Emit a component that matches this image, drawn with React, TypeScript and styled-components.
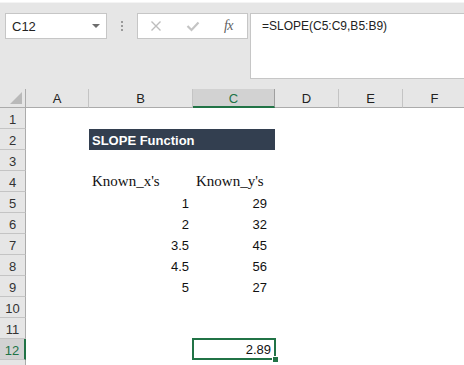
import React from "react";
import styled, { createGlobalStyle } from "styled-components";

const Global = createGlobalStyle`
  html, body { margin: 0; padding: 0; background: #ffffff; }
  body { width: 464px; height: 365px; overflow: hidden; font-family: "Liberation Sans", Arial, sans-serif; }
`;

const GREEN = "#217346";

const Page = styled.div`
  width: 464px;
  height: 365px;
  overflow: hidden;
  display: flex;
  flex-direction: column;
`;

const Toolbar = styled.div`
  flex-shrink: 0;
  box-sizing: border-box;
  background: #e6e6e6;
  border-top: 1px solid #f4f4f4;
  margin-top: 2px;
  height: 87px;
  padding: 10px 0 0 5px;
  display: flex;
  align-items: flex-start;
`;

const NameBox = styled.div`
  width: 102px;
  height: 26px;
  box-sizing: border-box;
  background: #fff;
  border: 1px solid #c6c6c6;
  display: flex;
  align-items: center;
  justify-content: space-between;
  padding: 0 6px 0 6px;
  font-size: 13px;
  color: #222;
`;

const Arrow = styled.span`
  width: 0;
  height: 0;
  border-left: 4px solid transparent;
  border-right: 4px solid transparent;
  border-top: 4px solid #6d6d6d;
`;

const Dots = styled.div`
  width: 30px;
  height: 26px;
  display: flex;
  flex-direction: column;
  align-items: center;
  justify-content: center;
  gap: 2px;
  span { width: 2px; height: 2px; background: #9a9a9a; }
`;

const Buttons = styled.div`
  width: 111px;
  height: 26px;
  box-sizing: border-box;
  background: #fff;
  border: 1px solid #c6c6c6;
  display: flex;
  align-items: center;
  justify-content: space-around;
  padding: 0 2px 0 0;
  margin-right: 2px;
`;

const Fx = styled.span`
  font-family: "Liberation Serif", "Times New Roman", serif;
  font-style: italic;
  font-size: 14px;
  color: #5f5f5f;
  letter-spacing: -0.5px;
`;

const FormulaBar = styled.div`
  flex: 1;
  height: 66px;
  box-sizing: border-box;
  background: #fff;
  border: 1px solid #c6c6c6;
  border-right: none;
  padding: 5px 0 0 11px;
  font-size: 12px;
  color: #222;
`;

const Sheet = styled.div`
  flex-shrink: 0;
  display: grid;
  grid-template-columns: 26px 63px 104px 82px 64px 64px 64px;
  grid-template-rows: 19px repeat(13, 21px);
  background: #fff;
`;

const Corner = styled.div`
  background: #e6e6e6;
  border-right: 1px solid #ababab;
  border-bottom: 1px solid #ababab;
  position: relative;
  &::after {
    content: "";
    position: absolute;
    right: 3px;
    bottom: 3px;
    width: 0;
    height: 0;
    border-left: 12px solid transparent;
    border-bottom: 12px solid #b9b9b9;
  }
`;

const ColHead = styled.div<{ $sel?: boolean }>`
  box-sizing: border-box;
  background: ${(p) => (p.$sel ? "#d2d2d2" : "#e6e6e6")};
  border-right: 1px solid ${(p) => (p.$sel ? "#9f9f9f" : "#c4c4c4")};
  border-bottom: ${(p) => (p.$sel ? `2px solid ${GREEN}` : "1px solid #ababab")};
  color: ${(p) => (p.$sel ? GREEN : "#222")};
  font-size: 13px;
  line-height: 19px;
  text-align: center;
`;

const RowHead = styled.div<{ $sel?: boolean }>`
  box-sizing: border-box;
  background: ${(p) => (p.$sel ? "#d2d2d2" : "#e6e6e6")};
  border-right: ${(p) => (p.$sel ? `2px solid ${GREEN}` : "1px solid #ababab")};
  border-bottom: 1px solid #c4c4c4;
  color: ${(p) => (p.$sel ? GREEN : "#333")};
  font-size: 13px;
  line-height: 21px;
  padding-top: 1px;
  text-align: center;
`;

const Cell = styled.div<{ $pad?: number }>`
  box-sizing: border-box;
  font-size: 13px;
  line-height: 21px;
  padding: 1px ${(p) => p.$pad ?? 4}px 0 3px;
  text-align: right;
  color: #111;
  white-space: nowrap;
`;

const SerifCell = styled.div`
  box-sizing: border-box;
  font-family: "Liberation Serif", "Times New Roman", serif;
  font-size: 15px;
  line-height: 21px;
  padding-left: 3px;
  color: #111;
  white-space: nowrap;
`;

const TitleCell = styled.div`
  grid-column: span 2;
  box-sizing: border-box;
  background: #333f50;
  color: #fff;
  font-weight: bold;
  font-size: 13px;
  line-height: 21px;
  padding: 1px 0 0 3px;
  white-space: nowrap;
`;

const Selected = styled.div`
  box-sizing: border-box;
  position: relative;
  border: 2px solid ${GREEN};
  margin: -1px -1px 0 -1px;
  font-size: 13px;
  line-height: 19px;
  text-align: right;
  padding: 0 3px 0 0;
  color: #111;
  &::after {
    content: "";
    position: absolute;
    right: -4px;
    bottom: -4px;
    width: 5px;
    height: 5px;
    background: ${GREEN};
    border: 1px solid #fff;
    border-right: none;
    border-bottom: none;
  }
`;

const Empty = styled.div``;

const cols = ["A", "B", "C", "D", "E", "F"];

const data: Record<number, { b?: string; c?: string }> = {
  5: { b: "1", c: "29" },
  6: { b: "2", c: "32" },
  7: { b: "3.5", c: "45" },
  8: { b: "4.5", c: "56" },
  9: { b: "5", c: "27" },
};

export default function App() {
  const rows: React.ReactNode[] = [];
  for (let r = 1; r <= 13; r++) {
    rows.push(
      <RowHead key={`h${r}`} $sel={r === 12}>
        {r <= 12 ? r : ""}
      </RowHead>
    );
    rows.push(<Empty key={`a${r}`} />);
    if (r === 2) {
      rows.push(<TitleCell key={`t${r}`}>SLOPE Function</TitleCell>);
    } else if (r === 4) {
      rows.push(<SerifCell key={`b${r}`}>Known_x's</SerifCell>);
      rows.push(<SerifCell key={`c${r}`}>Known_y's</SerifCell>);
    } else if (data[r]) {
      rows.push(<Cell key={`b${r}`} $pad={4}>{data[r].b}</Cell>);
      rows.push(<Cell key={`c${r}`} $pad={8}>{data[r].c}</Cell>);
    } else if (r === 12) {
      rows.push(<Empty key={`b${r}`} />);
      rows.push(<Selected key={`c${r}`}>2.89</Selected>);
    } else {
      rows.push(<Empty key={`b${r}`} />);
      rows.push(<Empty key={`c${r}`} />);
    }
    rows.push(<Empty key={`d${r}`} />);
    rows.push(<Empty key={`e${r}`} />);
    rows.push(<Empty key={`f${r}`} />);
  }

  return (
    <Page>
      <Global />
      <Toolbar>
        <NameBox>
          <span>C12</span>
          <Arrow />
        </NameBox>
        <Dots>
          <span />
          <span />
          <span />
        </Dots>
        <Buttons>
          <svg width="12" height="12" viewBox="0 0 12 12">
            <path d="M1.5 1.5 L10.5 10.5 M10.5 1.5 L1.5 10.5" stroke="#bdbdbd" strokeWidth="1.4" fill="none" />
          </svg>
          <svg width="14" height="12" viewBox="0 0 14 12">
            <path d="M1.5 6 L5.5 10 L12.5 2.5" stroke="#c4c4c4" strokeWidth="2.2" fill="none" />
          </svg>
          <Fx>fx</Fx>
        </Buttons>
        <FormulaBar>=SLOPE(C5:C9,B5:B9)</FormulaBar>
      </Toolbar>
      <Sheet>
        <Corner />
        {cols.map((c) => (
          <ColHead key={c} $sel={c === "C"}>
            {c}
          </ColHead>
        ))}
        {rows}
      </Sheet>
    </Page>
  );
}
